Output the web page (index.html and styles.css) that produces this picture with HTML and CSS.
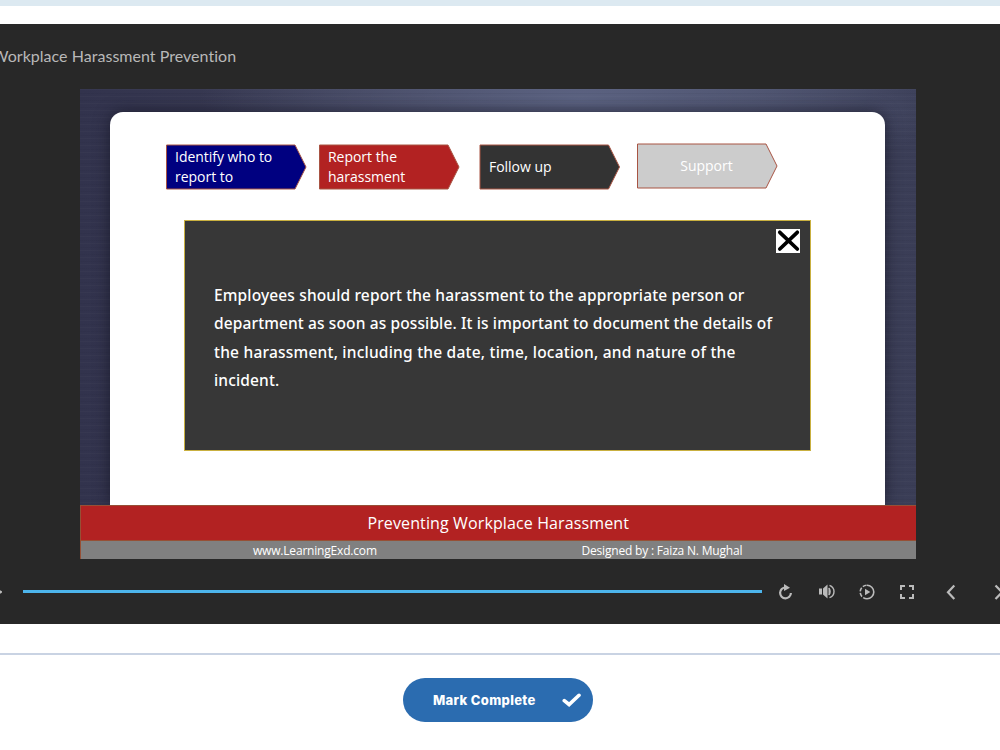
FILE: index.html
```html
<!DOCTYPE html>
<html lang="en">
<head>
  <meta charset="UTF-8">
  <meta name="viewport" content="width=device-width, initial-scale=1.0">
  <title>Workplace Harassment Prevention</title>
  <link rel="stylesheet" href="styles.css">
</head>
<body>
  <div class="topbar"></div>

  <div class="player">
    <div class="player-title"><span>Workplace Harassment Prevention</span></div>

    <div class="slide">
      <div class="panel">
        <div class="steps">
          <div class="step">
            <svg width="141" height="46"><path d="M.5 1H129L140 23L129 45H.5Z" fill="#000080"/></svg>
            <span>Identify who to<br>report to</span>
          </div>
          <div class="step report">
            <svg width="141" height="46"><path d="M.5 1H129L140 23L129 45H.5Z" fill="#b22222"/></svg>
            <span>Report the<br>harassment</span>
          </div>
          <div class="step follow">
            <svg width="141" height="46"><path d="M1 1H129.500L140.500 23L129.500 45H1Z" fill="#333"/></svg>
            <span>Follow up</span>
          </div>
          <div class="step support">
            <svg width="141" height="46"><path d="M.5 1H129L140 23L129 45H.5Z" fill="#ccc"/></svg>
            <span>Support</span>
          </div>
        </div>

        <div class="popup">
          <button class="close" aria-label="Close">
            <svg width="24" height="24" viewBox="0 0 24 24"><path d="M3.800 3.300L21.300 20M21.300 3.300L3.800 20" fill="none" stroke="#000" stroke-width="3.700" stroke-linecap="round"/></svg>
          </button>
          <p>
            <span class="line l1">Employees should report the harassment to the appropriate person or</span>
            <span class="line l2">department as soon as possible. It is important to document the details of</span>
            <span class="line l3">the harassment, including the date, time, location, and nature of the</span>
            <span class="line l4">incident.</span>
          </p>
        </div>
      </div>
      <div class="banner"><span>Preventing Workplace Harassment</span></div>
      <div class="credits">
        <span class="site">www.LearningExd.com</span>
        <span class="author">Designed by : Faiza N. Mughal</span>
      </div>
    </div>

    <div class="controls">
      <svg class="play" width="14" height="16" viewBox="0 0 14 16"><path d="M1 2L12 8L1 14Z" fill="#bbb" stroke="#bbb" stroke-width="2" stroke-linejoin="round"/></svg>
      <div class="progress"></div>
      <svg class="replay" width="16" height="18" viewBox="0 0 16 18"><path d="M7.500 4.500A5.400 5.400 0 1 0 12.900 10" fill="none" stroke="#bbb" stroke-width="2.200"/><path d="M6 1L12 4.700L6 8Z" fill="#bbb"/></svg>
      <svg class="volume" width="18" height="16" viewBox="0 0 18 16"><path d="M1 4.500H4V10.500H1ZM5 4.500L9.500 .5V14.500L5 10.500Z" fill="#bbb"/><path d="M11 4Q13.200 7.500 11 11M11.500 1.300C17.500 3.500 17.500 11.500 11.500 13.700" fill="none" stroke="#bbb" stroke-width="1.400"/><path d="M10.500 3.500Q13.500 7.500 10.500 11.500Z" fill="#bbb"/></svg>
      <svg class="speed" width="16" height="16" viewBox="0 0 16 16"><path d="M8 1.200A6.800 6.800 0 0 1 8 14.800" fill="none" stroke="#bbb" stroke-width="1.600"/><path d="M8 14.800A6.800 6.800 0 0 1 8 1.200" fill="none" stroke="#bbb" stroke-width="1.600" stroke-dasharray="4 1.600"/><path d="M6 4.700L11.300 8L6 11.300Z" fill="#bbb"/></svg>
      <svg class="full" width="14" height="14" viewBox="0 0 14 14"><path d="M1 5V1H5M9 1H13V5M13 9V13H9M5 13H1V9" fill="none" stroke="#bbb" stroke-width="2"/></svg>
      <svg class="prev" width="10" height="16" viewBox="0 0 10 16"><path d="M8.300 1.500L2 8.300L8.300 15" fill="none" stroke="#bbb" stroke-width="2.200"/></svg>
      <svg class="next" width="10" height="16" viewBox="0 0 10 16"><path d="M1.500 1.500L8 8.300L1.500 15" fill="none" stroke="#bbb" stroke-width="2.200"/></svg>
    </div>
  </div>

  <div class="footer">
    <button class="complete">
      <span>Mark Complete</span>
      <svg width="20" height="14" viewBox="0 0 20 14"><path d="M2.300 7.600L7.100 11.500L17 2.300" fill="none" stroke="#fff" stroke-width="3.600" stroke-linecap="round" stroke-linejoin="miter"/></svg>
    </button>
  </div>
</body>
</html>
```
FILE: styles.css
```css
* {
  box-sizing: border-box;
}
body {
  margin: 0;
  height: 750px;
  overflow: hidden;
  background: #fff;
  font-family: "Open Sans", sans-serif;
}
svg {
  display: block;
  flex: none;
}
button {
  border: none;
  padding: 0;
  cursor: pointer;
}
.topbar {
  height: 6px;
  margin-bottom: 18px;
  background: #dce9f1;
}
.player {
  height: 600px;
  background: #282828;
  overflow: hidden;
}
.player-title {
  height: 65px;
  margin-left: -8px;
  padding-top: 21px;
  font: 16px/21px Lato, sans-serif;
  font-variant-ligatures: none;
  letter-spacing: 0.03px;
  color: #b8b8b8;
  white-space: nowrap;
}

/* slide */
.slide {
  width: 835.5px;
  height: 470px;
  margin-left: 80px;
  padding-top: 23px;
  overflow: hidden;
  color: #fff;
  background:
    repeating-linear-gradient(rgba(255, 255, 255, 0.018) 0 1px, transparent 1px 4px, rgba(0, 0, 0, 0.03) 4px 5px, transparent 5px 7px),
    radial-gradient(ellipse 380px 90px at 500px 10px, #5c6382, rgba(92, 99, 130, 0)),
    linear-gradient(90deg, #32334d, #3e4058 40%, #444861 80%, #3a3d56);
}
.panel {
  width: 775px;
  height: 393px;
  margin-left: 30px;
  padding: 32px 0 0 56px;
  background: #fff;
  border-radius: 13px 13px 0 0;
  box-shadow: 0 0 16px rgba(20, 20, 36, 0.75);
}
.steps {
  display: flex;
}
.step {
  display: grid;
  align-items: center;
  width: 141px;
  height: 46px;
  font-size: 14px;
  line-height: 20px;
}
.step svg,
.step span {
  grid-area: 1 / 1;
}
.step svg path {
  stroke: #a85443;
}
.step span {
  padding-left: 9px;
  letter-spacing: -0.03px;
  white-space: nowrap;
}
.report {
  margin-left: 12px;
}
.follow {
  margin-left: 19px;
}
.follow span {
  padding-left: 10px;
}
.support {
  margin: -1px 0 0 17px;
}
.support span {
  padding: 0 2px 0 0;
  text-align: center;
}
.popup {
  width: 627px;
  height: 231px;
  margin: 30px 0 0 18px;
  padding: 8px 10px 0 29px;
  background: #373737;
  border: 1px solid #c9b040;
}
.close {
  display: block;
  width: 24px;
  height: 24px;
  margin-left: auto;
  background: #fff;
}
.popup p {
  margin: 28px 0 0;
  font: 500 15.5px/28.4px "Noto Sans", sans-serif;
}
.line {
  display: block;
  width: max-content;
  white-space: nowrap;
}
.l1 {
  letter-spacing: 0.14px;
}
.l2 {
  letter-spacing: 0.12px;
}
.l3 {
  letter-spacing: 0.22px;
}
.l4 {
  letter-spacing: 0.15px;
}
.banner {
  height: 36px;
  border: 1px solid #965036;
  border-right: none;
  background: #b22222;
  text-align: center;
  font-size: 16px;
  line-height: 34px;
  letter-spacing: 0.12px;
}
.credits {
  display: flex;
  height: 18px;
  background: #808080;
  border-left: 1px solid #965036;
  font-size: 12px;
  line-height: 20px;
  letter-spacing: -0.19px;
  white-space: nowrap;
}
.site {
  width: 328.5px;
  margin-left: 172px;
}

/* player controls */
.controls {
  display: flex;
  align-items: center;
  width: 1010px;
  height: 65px;
}
.play {
  margin-left: -11px;
}
.progress {
  width: 739px;
  height: 3px;
  margin-left: 20px;
  background: #4db5ec;
}
.replay {
  margin-left: 15.5px;
}
.volume {
  margin-left: 24.5px;
}
.speed {
  margin-left: 23px;
}
.full {
  margin-left: 25px;
}
.prev {
  margin-left: 32px;
}
.next {
  margin-left: 38px;
}

/* footer */
.footer {
  display: flex;
  justify-content: center;
  margin-top: 29px;
  padding: 23px 4px 0 0;
  border-top: 2px solid #c9d3e3;
}
.complete {
  display: flex;
  align-items: center;
  width: 190px;
  height: 44px;
  padding: 0 11px 0 30px;
  justify-content: space-between;
  border-radius: 22px;
  background: #2b6cb0;
  color: #fff;
  font: 800 13px/20px Inter, sans-serif;
  letter-spacing: 0.33px;
}
.complete span {
  padding-bottom: 1px;
}
```
